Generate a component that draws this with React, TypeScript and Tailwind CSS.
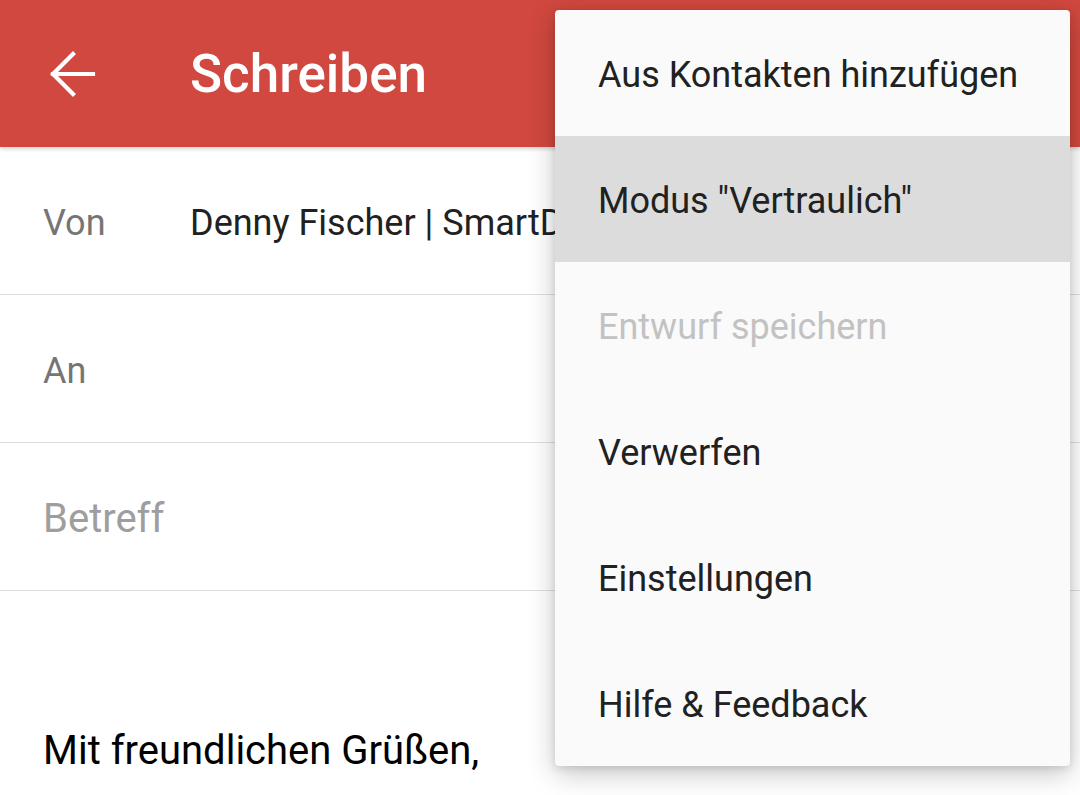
const menuItems = [
  { label: "Aus Kontakten hinzufügen" },
  { label: 'Modus "Vertraulich"', active: true },
  { label: "Entwurf speichern", disabled: true },
  { label: "Verwerfen" },
  { label: "Einstellungen" },
  { label: "Hilfe & Feedback" },
];

const fields = [
  { label: "Von", value: "Denny Fischer | SmartDroid <denny@smartdroid.de>" },
  { label: "An", value: "" },
  { label: "Betreff", value: "", placeholder: true },
];

function BackArrow() {
  return (
    <svg width="48" height="48" viewBox="0 0 48 48" fill="none">
      <path
        d="M5 24H45M5 24L25 4M5 24L25 44"
        stroke="white"
        strokeWidth="4.2"
        strokeLinecap="square"
      />
    </svg>
  );
}

export default function App() {
  return (
    <div
      className="relative w-[1080px] h-[795px] overflow-hidden bg-white"
      style={{ fontFamily: "Roboto, 'Noto Sans', sans-serif" }}
    >
      {/* Toolbar */}
      <div className="h-[147px] bg-[#d0483f] flex items-center pl-[48px] shadow-[0_2px_4px_rgba(0,0,0,0.18)] relative z-10">
        <BackArrow />
        <h1 className="ml-[94px] pt-[2px] text-white text-[53px] font-medium leading-none">
          Schreiben
        </h1>
      </div>

      {/* Fields */}
      <div className="flex flex-col">
        {fields.map((f) => (
          <div
            key={f.label}
            className="h-[148px] flex items-center pt-[4px] border-b border-[#dedede] whitespace-nowrap overflow-hidden"
          >
            {f.placeholder ? (
              <span className="pl-[43px] text-[40px] text-[#9e9e9e]">{f.label}</span>
            ) : (
              <>
                <span className="pl-[43px] w-[190px] shrink-0 text-[36px] text-[#757575]">{f.label}</span>
                <span className="text-[36px] text-[#212121]">{f.value}</span>
              </>
            )}
          </div>
        ))}
      </div>

      {/* Body */}
      <div className="pl-[43px] pt-[130px] text-[40px] text-black leading-[60px]">
        Mit freundlichen Grüßen,
      </div>

      {/* Overflow menu */}
      <div className="absolute left-[555px] top-[10px] w-[515px] bg-[#fafafa] rounded-[4px] z-20 shadow-[0_8px_28px_rgba(0,0,0,0.22),0_2px_8px_rgba(0,0,0,0.12)] overflow-hidden">
        {menuItems.map((item) => (
          <div
            key={item.label}
            className={`h-[126px] flex items-center pl-[43px] pt-[4px] text-[36px] whitespace-nowrap ${
              item.active ? "bg-[#dcdcdc]" : ""
            } ${item.disabled ? "text-[#c2c2c2]" : "text-[#212121]"}`}
          >
            {item.label}
          </div>
        ))}
      </div>
    </div>
  );
}
